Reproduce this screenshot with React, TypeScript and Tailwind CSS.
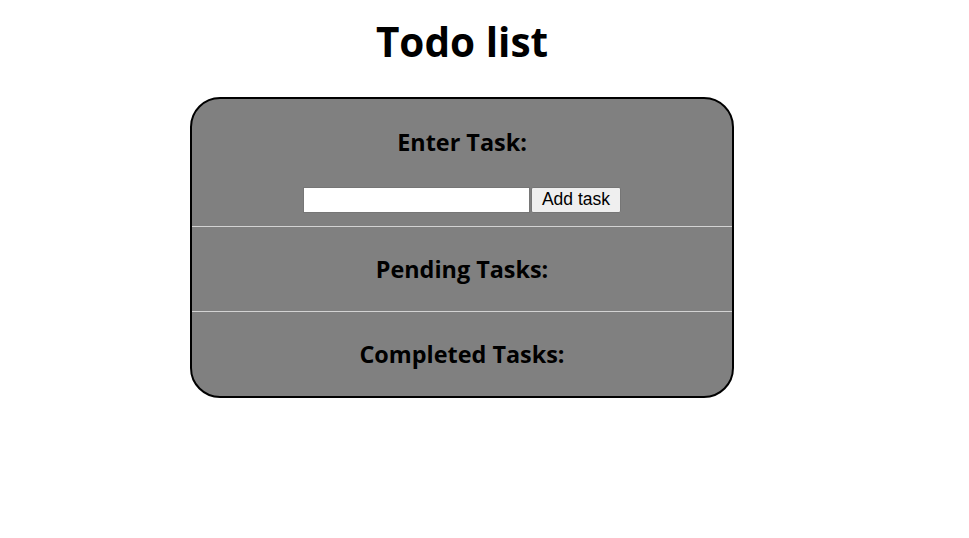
export default function App() {
  return (
    <div className="min-h-screen bg-white font-['Open_Sans',sans-serif] text-black">
      <div className="w-[924px] flex flex-col items-center">
        <h1 className="h-[97px] pb-[13px] flex items-center text-[40.5px] font-bold leading-none">
          Todo list
        </h1>

        <div className="w-[544px] rounded-[30px] border-2 border-black bg-[#808080] overflow-hidden">
          <section className="h-[128px] flex flex-col items-center border-b border-[#d3d3d3]">
            <h2 className="mt-[28px] h-[32px] flex items-center text-[23.4px] font-bold">Enter Task:</h2>
            <div className="mt-[28px] flex items-center">
              <input
                type="text"
                className="w-[227px] h-[26px] bg-white border border-[#767676] outline-none px-1"
              />
              <button
                type="button"
                className="ml-[1px] w-[90px] h-[26px] bg-[#efefef] border border-[#767676] rounded-[2px] font-['Liberation_Sans',sans-serif] text-[17.5px] leading-none"
              >
                Add task
              </button>
            </div>
          </section>

          <section className="h-[85px] flex items-center justify-center border-b border-[#d3d3d3]">
            <h2 className="mt-[2px] text-[23.4px] font-bold">Pending Tasks:</h2>
          </section>

          <section className="h-[84px] flex items-center justify-center">
            <h2 className="mt-[2px] text-[23.4px] font-bold">Completed Tasks:</h2>
          </section>
        </div>
      </div>
    </div>
  );
}
